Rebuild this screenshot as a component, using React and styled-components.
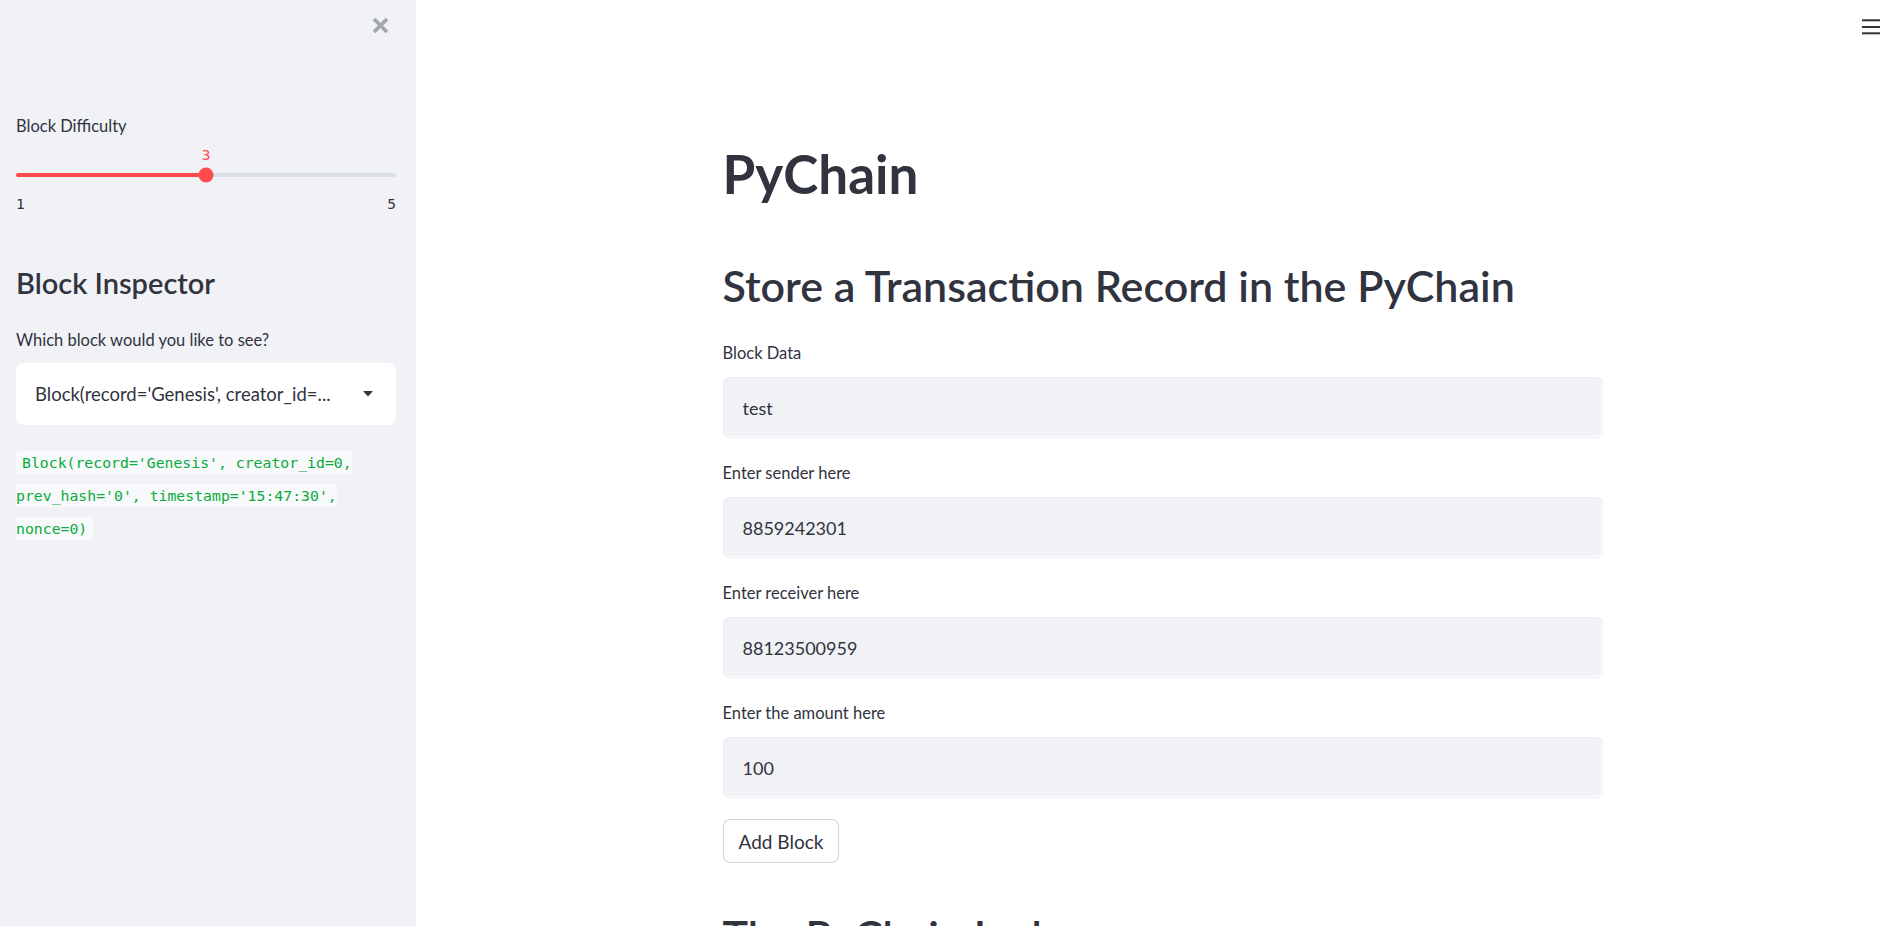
import React from "react";
import styled, { createGlobalStyle } from "styled-components";

const GlobalStyle = createGlobalStyle`
  html, body {
    margin: 0;
    padding: 0;
    background: #ffffff;
    color: #31333f;
    font-family: Lato, "Noto Sans", sans-serif;
  }
  * { box-sizing: border-box; }
`;

const fields = [
  { label: "Block Data", value: "test" },
  { label: "Enter sender here", value: "8859242301" },
  { label: "Enter receiver here", value: "88123500959" },
  { label: "Enter the amount here", value: "100" },
];

function App() {
  return (
    <Wrapper>
      <GlobalStyle />
      <Sidebar>
        <SidebarHeader>
          <CloseButton aria-label="Close sidebar">
            <svg width="17" height="17" viewBox="0 0 17 17">
              <path d="M2 2 L15 15 M15 2 L2 15" stroke="currentColor" strokeWidth="3.8" />
            </svg>
          </CloseButton>
        </SidebarHeader>

        <SliderBlock>
          <Label>Block Difficulty</Label>
          <ThumbValueRow>
            <ThumbValue $pct={50}>3</ThumbValue>
          </ThumbValueRow>
          <Track>
            <TrackFill style={{ width: "50%" }} />
            <Thumb style={{ left: "50%" }} />
          </Track>
          <Ticks>
            <span>1</span>
            <span>5</span>
          </Ticks>
        </SliderBlock>

        <SideHeading>Block Inspector</SideHeading>
        <Label>Which block would you like to see?</Label>
        <Select>
          <SelectText>Block(record='Genesis', creator_id=...</SelectText>
          <svg width="10" height="6" viewBox="0 0 10 6">
            <path d="M0 0 L10 0 L5 5.5 Z" fill="#31333f" />
          </svg>
        </Select>
        <CodeParagraph>
          <InlineCode>
            Block(record='Genesis', creator_id=0, prev_hash='0', timestamp='15:47:30', nonce=0)
          </InlineCode>
        </CodeParagraph>
      </Sidebar>

      <Main>
        <TopBar>
          <MenuButton aria-label="Menu">
            <svg width="18" height="16" viewBox="0 0 18 16">
              <rect x="0" y="0.3" width="18" height="2" fill="#31333f" />
              <rect x="0" y="7" width="18" height="2" fill="#31333f" />
              <rect x="0" y="13.3" width="18" height="2" fill="#31333f" />
            </svg>
          </MenuButton>
        </TopBar>
        <Content>
          <Title>PyChain</Title>
          <Heading>Store a Transaction Record in the PyChain</Heading>
          {fields.map((f) => (
            <Field key={f.label}>
              <Label>{f.label}</Label>
              <Input defaultValue={f.value} />
            </Field>
          ))}
          <Button>Add Block</Button>
          <Heading $gap={47}>The PyChain Ledger</Heading>
        </Content>
      </Main>
    </Wrapper>
  );
}

const Wrapper = styled.div`
  display: flex;
  width: 100%;
  height: 100vh;
  overflow: hidden;
`;

const Sidebar = styled.aside`
  flex: 0 0 416px;
  display: flex;
  flex-direction: column;
  background: #f0f2f6;
  padding: 0 20px 0 16px;
`;

const SidebarHeader = styled.div`
  height: 52px;
  display: flex;
  justify-content: flex-end;
  align-items: flex-start;
  padding: 17px 7px 0 0;
`;

const CloseButton = styled.button`
  border: none;
  background: none;
  padding: 0;
  color: #a4a6ad;
  line-height: 0;
  cursor: pointer;
`;

const SliderBlock = styled.div`
  margin-top: 62px;
  display: flex;
  flex-direction: column;
`;

const Label = styled.div`
  font-size: 16.5px;
  line-height: 24px;
  color: #31333f;
`;

const ThumbValueRow = styled.div`
  position: relative;
  height: 22px;
  margin-top: 6px;
`;

const ThumbValue = styled.span`
  position: absolute;
  left: ${(p) => p.$pct}%;
  transform: translateX(-50%);
  font-family: "DejaVu Sans Mono", monospace;
  font-size: 14.5px;
  line-height: 22px;
  color: #ff4b4b;
`;

const Track = styled.div`
  position: relative;
  height: 4px;
  margin: 7px 0;
  border-radius: 2px;
  background: #dcdfe6;
`;

const TrackFill = styled.div`
  height: 100%;
  border-radius: 2px;
  background: #ff4b4b;
`;

const Thumb = styled.div`
  position: absolute;
  top: 50%;
  width: 15px;
  height: 15px;
  border-radius: 50%;
  background: #ff4b4b;
  transform: translate(-50%, -50%);
`;

const Ticks = styled.div`
  display: flex;
  justify-content: space-between;
  margin-top: 9px;
  font-family: "DejaVu Sans Mono", monospace;
  font-size: 14.5px;
  line-height: 22px;
  color: #31333f;
`;

const SideHeading = styled.h2`
  margin: 51px 0 27px;
  font-size: 29px;
  font-weight: 600;
  line-height: 1.2;
  color: #31333f;
`;

const Select = styled.div`
  margin-top: 11px;
  height: 62px;
  display: flex;
  align-items: center;
  gap: 12px;
  padding: 0 23px 0 19px;
  background: #ffffff;
  border-radius: 8px;
`;

const SelectText = styled.span`
  flex: 1;
  min-width: 0;
  white-space: nowrap;
  overflow: hidden;
  text-overflow: ellipsis;
  font-size: 18.5px;
  color: #31333f;
`;

const CodeParagraph = styled.p`
  margin: 21px 0 0;
  line-height: 32px;
`;

const InlineCode = styled.code`
  font-family: "DejaVu Sans Mono", monospace;
  font-size: 14.8px;
  color: #09ab3b;
  background: #f8f9fb;
  padding: 3px 6px;
  border-radius: 4px;
`;

const Main = styled.main`
  flex: 1;
  display: flex;
  flex-direction: column;
  padding-left: 24px;
  min-width: 0;
`;

const TopBar = styled.div`
  height: 52px;
  display: flex;
  justify-content: flex-end;
  align-items: flex-start;
  padding: 19px 5px 0 0;
`;

const MenuButton = styled.button`
  border: none;
  background: none;
  padding: 0;
  line-height: 0;
  cursor: pointer;
`;

const Content = styled.div`
  width: 880px;
  margin: 0 auto;
  display: flex;
  flex-direction: column;
  align-items: flex-start;
`;

const Title = styled.h1`
  margin: 107px 0 0;
  font-size: 53px;
  font-weight: 700;
  line-height: 1.2;
  color: #31333f;
`;

const Heading = styled.h2`
  margin: ${(p) => p.$gap ?? 54}px 0 0;
  font-size: 43px;
  font-weight: 600;
  line-height: 1.2;
  color: #31333f;
`;

const Field = styled.div`
  width: 100%;
  margin-top: 30px;
  &:nth-of-type(n + 2) {
    margin-top: 23px;
  }
`;

const Input = styled.input`
  display: block;
  width: 100%;
  height: 61px;
  margin-top: 12px;
  padding: 0 19px;
  border: 1px solid #eceef3;
  border-radius: 6px;
  background: #f0f2f6;
  box-shadow: inset -2px -2px 0 -1px #ffffff;
  font-family: inherit;
  font-size: 18px;
  color: #31333f;
  outline: none;
`;

const Button = styled.button`
  margin-top: 21px;
  height: 44px;
  padding: 0 15px;
  background: #ffffff;
  border: 1px solid rgba(49, 51, 63, 0.2);
  border-radius: 7px;
  font-family: inherit;
  font-size: 19px;
  color: #31333f;
  cursor: pointer;
`;

export default App;
